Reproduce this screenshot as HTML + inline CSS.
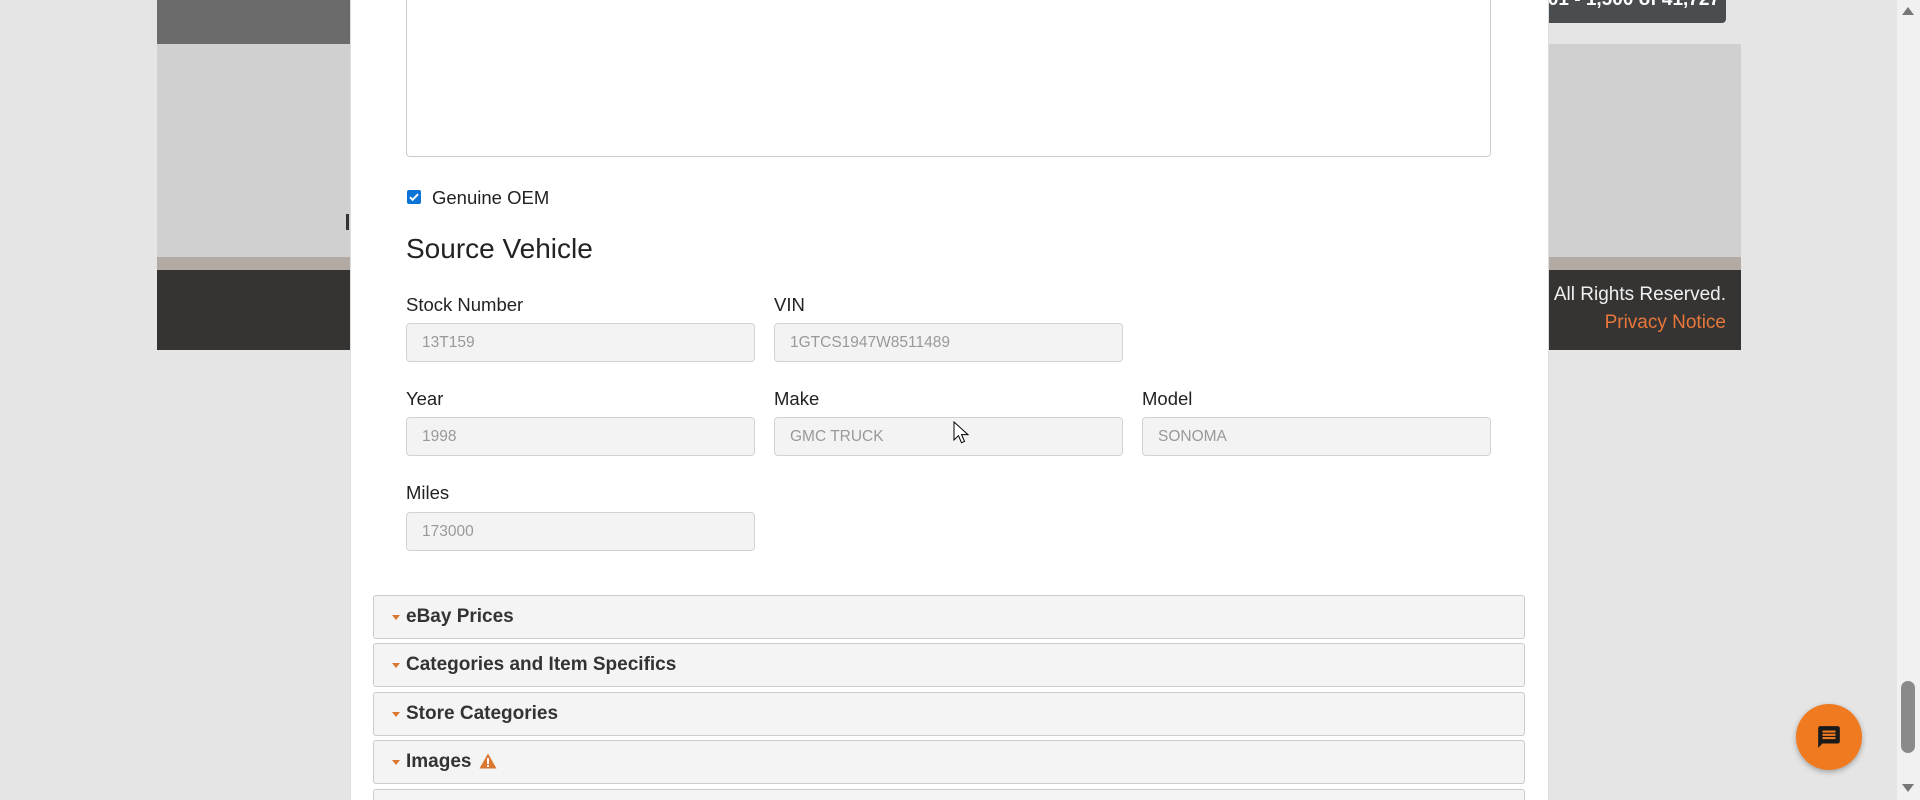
<!DOCTYPE html>
<html style="overflow:hidden"><head><meta charset="utf-8"><style>
*{box-sizing:border-box;margin:0;padding:0}
html,body{width:1920px;height:800px;overflow:hidden}
body{background:#e5e5e5;font-family:"Liberation Sans",Arial,sans-serif;position:relative}
.a{position:absolute}
.lbl{position:absolute;font-size:18.5px;color:#222;line-height:22px}
.inp{position:absolute;width:349px;height:39px;background:#f3f3f3;border:1px solid #d3d3d3;border-radius:4px;font-size:15.5px;color:#999;padding-left:15px;line-height:37px}
.acc{position:absolute;left:373px;width:1152px;height:44px;background:#f4f4f4;border:1px solid #cbcbcb;border-radius:3px;font-weight:bold;font-size:19px;color:#333;line-height:42px;padding-left:32px}
.acc:before{content:"";position:absolute;left:18px;top:19px;border-left:4px solid transparent;border-right:4px solid transparent;border-top:5px solid #d9762f}
</style></head><body>
<div class="a" style="left:157px;top:0;width:1392px;height:44px;background:#6b6b6b"></div>
<div class="a" style="left:157px;top:44px;width:1584px;height:213px;background:#d0d0d0"></div>
<div class="a" style="left:157px;top:257px;width:1584px;height:13px;background:#b3aaa4"></div>
<div class="a" style="left:157px;top:270px;width:1584px;height:80px;background:#353433"></div>
<div class="a" style="left:1450px;top:0;width:276px;height:23px;background:#4a4d50;border-radius:0 0 4px 4px"></div>
<div class="a" style="left:1450px;top:-12px;width:270px;text-align:right;color:#fff;font-weight:bold;font-size:19px;line-height:24px">1,401 - 1,500 of 41,727</div>
<div class="a" style="left:1400px;top:283px;width:326px;text-align:right;color:#f0f0f0;font-size:19px;line-height:24px">All Rights Reserved.</div>
<div class="a" style="left:1400px;top:311px;width:326px;text-align:right;color:#e8773a;font-size:19px;line-height:24px">Privacy Notice</div>
<div class="a" style="left:346px;top:214px;width:3px;height:16px;background:#333"></div>
<div class="a" style="left:350px;top:0;width:1199px;height:800px;background:#fff;border-left:1px solid #ddd;border-right:1px solid #ddd"></div>
<div class="a" style="left:406px;top:-10px;width:1085px;height:167px;border:1px solid #ccc;border-radius:4px;background:#fff"></div>
<div class="a" style="left:407px;top:190px;width:14px;height:14px;background:#0b74d6;border-radius:2px"><svg width="14" height="14" viewBox="0 0 14 14"><path d="M3 7.2l2.6 2.6L11 4.2" stroke="#fff" stroke-width="2" fill="none"/></svg></div>
<div class="lbl" style="left:432px;top:187px">Genuine OEM</div>
<div class="a" style="left:406px;top:232px;font-size:28px;color:#222;line-height:34px">Source Vehicle</div>
<div class="lbl" style="left:406px;top:294px">Stock Number</div>
<div class="lbl" style="left:774px;top:294px">VIN</div>
<div class="inp" style="left:406px;top:323px">13T159</div>
<div class="inp" style="left:774px;top:323px">1GTCS1947W8511489</div>
<div class="lbl" style="left:406px;top:388px">Year</div>
<div class="lbl" style="left:774px;top:388px">Make</div>
<div class="lbl" style="left:1142px;top:388px">Model</div>
<div class="inp" style="left:406px;top:417px">1998</div>
<div class="inp" style="left:774px;top:417px">GMC TRUCK</div>
<div class="inp" style="left:1142px;top:417px">SONOMA</div>
<div class="lbl" style="left:406px;top:482px">Miles</div>
<div class="inp" style="left:406px;top:512px">173000</div>
<svg class="a" style="left:953px;top:421px" width="16" height="24" viewBox="0 0 16 24"><path d="M1 1v18l4.5-4.3 3 7 3-1.3-3-6.8H15z" fill="#fff" stroke="#000" stroke-width="1"/></svg>
<div class="acc" style="top:595px">eBay Prices</div>
<div class="acc" style="top:643px">Categories and Item Specifics</div>
<div class="acc" style="top:692px">Store Categories</div>
<div class="acc" style="top:740px">Images <svg style="vertical-align:-2px;margin-left:2px" width="18" height="16" viewBox="0 0 18 16"><path d="M9 0.5L17.5 15.5H0.5z" fill="#d9762f"/><rect x="8" y="5" width="2" height="6" fill="#fff"/><rect x="8" y="12" width="2" height="2" fill="#fff"/></svg></div>
<div class="a" style="left:373px;top:789px;width:1152px;height:11px;background:#f4f4f4;border:1px solid #cbcbcb;border-bottom:none;border-radius:3px 3px 0 0"></div>
<div class="a" style="left:1796px;top:704px;width:66px;height:66px;border-radius:50%;background:#f07a1f;box-shadow:0 2px 6px rgba(0,0,0,.3)"></div>
<svg class="a" style="left:1816px;top:724px" width="26" height="26" viewBox="0 0 24 24"><path d="M20 2H4c-1.1 0-2 .9-2 2v18l4-4h14c1.1 0 2-.9 2-2V4c0-1.1-.9-2-2-2zM18 14H6v-2h12v2zm0-3H6V9h12v2zm0-3H6V6h12v2z" fill="#1a1a1a"/></svg>
<div class="a" style="left:1897px;top:0;width:23px;height:800px;background:#f1f1f1"></div>
<div class="a" style="left:1901px;top:681px;width:14px;height:72px;background:#8a8a8a;border-radius:7px"></div>
<div class="a" style="left:1902px;top:7px;border-left:6px solid transparent;border-right:6px solid transparent;border-bottom:8px solid #777"></div>
<div class="a" style="left:1902px;top:784px;border-left:6px solid transparent;border-right:6px solid transparent;border-top:8px solid #777"></div>
</body></html>
